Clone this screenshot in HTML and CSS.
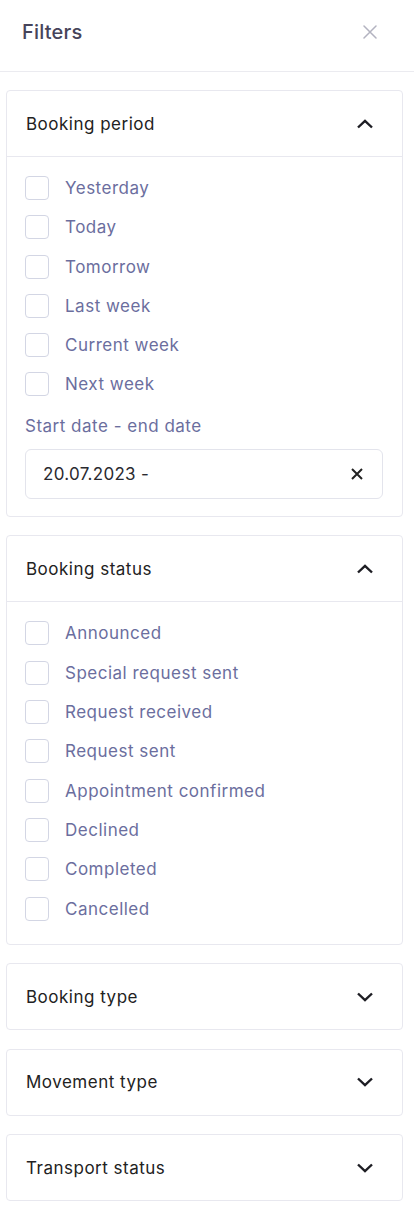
FILE: index.html
```html
<!DOCTYPE html>
<html lang="en">
<head>
    <meta charset="UTF-8">
    <meta name="viewport" content="width=device-width, initial-scale=1.0">
    <title>Filters</title>
    <link rel="stylesheet" href="styles.css">
</head>
<body>
    <div class="panel">
        <div class="panel-header">
            <h1>Filters</h1>
            <button class="close-btn" type="button" aria-label="Close">
                <svg width="14" height="14" viewBox="0 0 14 14"><path d="M1 1L13 13M13 1L1 13" stroke="#b3b3c0" stroke-width="1.5" stroke-linecap="round" fill="none"/></svg>
            </button>
        </div>

        <div class="panel-body">
            <div class="card">
                <div class="card-header">
                    <span>Booking period</span>
                    <svg class="chevron" width="18" height="10" viewBox="0 0 18 10"><path d="M2 8.5L9 1.8L16 8.5" stroke="#1e1e24" stroke-width="2.4" fill="none"/></svg>
                </div>
                <div class="card-content">
                    <label class="check-row"><span class="box"></span>Yesterday</label>
                    <label class="check-row"><span class="box"></span>Today</label>
                    <label class="check-row"><span class="box"></span>Tomorrow</label>
                    <label class="check-row"><span class="box"></span>Last week</label>
                    <label class="check-row"><span class="box"></span>Current week</label>
                    <label class="check-row"><span class="box"></span>Next week</label>
                    <div class="date-label">Start date - end date</div>
                    <div class="date-input">
                        <span>20.07.2023 -</span>
                        <svg width="12" height="12" viewBox="0 0 12 12"><path d="M1 1L11 11M11 1L1 11" stroke="#222" stroke-width="2" fill="none"/></svg>
                    </div>
                </div>
            </div>

            <div class="card">
                <div class="card-header">
                    <span>Booking status</span>
                    <svg class="chevron" width="18" height="10" viewBox="0 0 18 10"><path d="M2 8.5L9 1.8L16 8.5" stroke="#1e1e24" stroke-width="2.4" fill="none"/></svg>
                </div>
                <div class="card-content status-list">
                    <label class="check-row"><span class="box"></span>Announced</label>
                    <label class="check-row"><span class="box"></span>Special request sent</label>
                    <label class="check-row"><span class="box"></span>Request received</label>
                    <label class="check-row"><span class="box"></span>Request sent</label>
                    <label class="check-row"><span class="box"></span>Appointment confirmed</label>
                    <label class="check-row"><span class="box"></span>Declined</label>
                    <label class="check-row"><span class="box"></span>Completed</label>
                    <label class="check-row"><span class="box"></span>Cancelled</label>
                </div>
            </div>

            <div class="card">
                <div class="card-header closed">
                    <span>Booking type</span>
                    <svg class="chevron" width="18" height="10" viewBox="0 0 18 10"><path d="M2 1.5L9 8.2L16 1.5" stroke="#1e1e24" stroke-width="2.4" fill="none"/></svg>
                </div>
            </div>

            <div class="card">
                <div class="card-header closed">
                    <span>Movement type</span>
                    <svg class="chevron" width="18" height="10" viewBox="0 0 18 10"><path d="M2 1.5L9 8.2L16 1.5" stroke="#1e1e24" stroke-width="2.4" fill="none"/></svg>
                </div>
            </div>

            <div class="card">
                <div class="card-header closed">
                    <span>Transport status</span>
                    <svg class="chevron" width="18" height="10" viewBox="0 0 18 10"><path d="M2 1.5L9 8.2L16 1.5" stroke="#1e1e24" stroke-width="2.4" fill="none"/></svg>
                </div>
            </div>
        </div>
    </div>
</body>
</html>
```

FILE: styles.css
```css
body {
    margin: 0;
    font-family: 'Inter', 'Open Sans', sans-serif;
    background-color: white;
    color: #222;
}
.panel {
    width: 414px;
}
.panel-header {
    height: 72px;
    box-sizing: border-box;
    display: flex;
    align-items: center;
    justify-content: space-between;
    padding: 0 37px 8px 22px;
    border-bottom: 1px solid #ebebf0;
}
.panel-header h1 {
    margin: 0;
    font-size: 20px;
    font-weight: 500;
    letter-spacing: 0.2px;
    color: #46445a;
}
.close-btn {
    background: none;
    border: none;
    padding: 0;
    width: 14px;
    height: 14px;
    display: flex;
}
.panel-body {
    padding: 18px 11px 0 6px;
    display: flex;
    flex-direction: column;
    gap: 18.5px;
}
.card {
    border: 1px solid #e8e8ef;
    border-radius: 4px;
}
.card-header {
    height: 65px;
    display: flex;
    align-items: center;
    justify-content: space-between;
    padding: 0 28px 0 19px;
    font-size: 17px;
    letter-spacing: 0.5px;
    color: #222;
    border-bottom: 1px solid #e8e8ef;
}
.card-header.closed {
    border-bottom: none;
}
.card-content {
    padding: 19px 19px 17px 18px;
}
.check-row {
    display: flex;
    align-items: center;
    gap: 16px;
    height: 24px;
    margin-bottom: 15.3px;
    font-size: 17px;
    letter-spacing: 0.5px;
    color: #6b6e9e;
}
.box {
    width: 22px;
    height: 22px;
    border: 1px solid #d3d6e4;
    border-radius: 4px;
    flex-shrink: 0;
}
.status-list {
    padding-bottom: 8px;
}
.date-label {
    margin-top: 17.5px;
    font-size: 17px;
    letter-spacing: 0.5px;
    color: #6b6e9e;
    line-height: 24px;
}
.date-input {
    margin-top: 11px;
    height: 50px;
    box-sizing: border-box;
    border: 1px solid #e3e4ec;
    border-radius: 6px;
    display: flex;
    align-items: center;
    justify-content: space-between;
    padding: 0 19px 0 17px;
    font-size: 17px;
    letter-spacing: 0.3px;
    color: #2a2a30;
}
```
